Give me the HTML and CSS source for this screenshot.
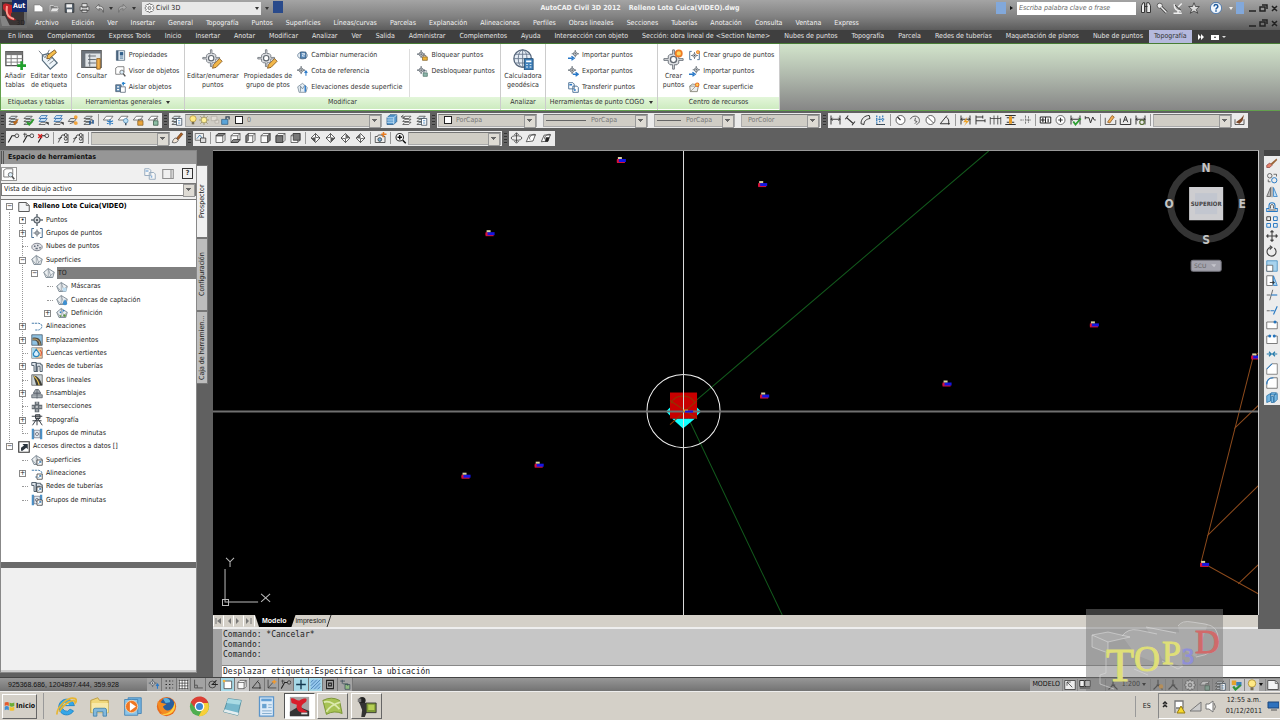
FILE: index.html
```html
<!DOCTYPE html>
<html lang="es">
<head>
<meta charset="utf-8">
<title>AutoCAD Civil 3D 2012 - Relleno Lote Cuica(VIDEO).dwg</title>
<link rel="stylesheet" href="styles.css">
</head>
<body>
<svg class="sprite" aria-hidden="true">
<defs>
<symbol id="layers" viewBox="0 0 16 16"><path d="M5 3h8l-3 3H2zM5 7h8l-3 3H2zM5 11h8l-3 3H2z" fill="#dce7ee" stroke="#444"/></symbol>
<symbol id="layer-brush" viewBox="0 0 16 16"><use href="#layers"/><path d="M7 11l4-2 4-3-2 5-3 4z" fill="#b96b21"/></symbol>
<symbol id="layer-check" viewBox="0 0 16 16"><use href="#layers"/><path d="M6 11l3 3 6-7" fill="none" stroke="#2a9d2c" stroke-width="2.5"/></symbol>
<symbol id="layer-blue" viewBox="0 0 16 16"><path d="M5 2h8l-3 4H2zM5 6h8l-3 4H2z" fill="#c9def2" stroke="#2d6eae"/><path d="M5 11h8l-3 3H2z" fill="#eee" stroke="#444"/><path d="M11 11h4v4z" fill="#333"/></symbol>
<symbol id="layer-star" viewBox="0 0 16 16"><path d="M4 6h8l-3 4H1zM3 13l5-2 5 2" fill="#ddd" stroke="#444"/><circle cx="11" cy="4" r="2.5" fill="#f2a43c"/><circle cx="11" cy="12" r="2.5" fill="#f2a43c"/></symbol>
<symbol id="layer-step" viewBox="0 0 16 16"><use href="#layers"/><path d="M9 9h2v5H9zM13 8h2v5h-2z" fill="#174e8c"/></symbol>
<symbol id="layer-freeze" viewBox="0 0 16 16"><path d="M5 3h9l-4 5H1z" fill="#fff" stroke="#555"/><path d="M10 7v8M6 9l8 4M14 9l-8 4" stroke="#2c7ac2" stroke-width="1.6"/></symbol>
<symbol id="layer-bulb" viewBox="0 0 16 16"><path d="M5 3h9l-4 5H1z" fill="#fff" stroke="#555"/><circle cx="11" cy="9" r="3" fill="#bce0f5" stroke="#4d88b1"/><path d="M11 12v3" stroke="#456" stroke-width="2"/></symbol>
<symbol id="layer-lock" viewBox="0 0 16 16"><path d="M5 3h9l-4 5H1z" fill="#fff" stroke="#555"/><path d="M8 9V7h5v3" fill="none" stroke="#555"/><path d="M7 9h7v6H7z" fill="#eaa43a" stroke="#85622a"/></symbol>
<symbol id="layer-unlock" viewBox="0 0 16 16"><path d="M5 3h9l-4 5H1z" fill="#fff" stroke="#555"/><path d="M9 9V6h4v2" fill="none" stroke="#555"/><path d="M8 9h6v6H8z" fill="#8cbda4" stroke="#355a46"/></symbol>
<symbol id="layer-prop" viewBox="0 0 16 16"><use href="#layers"/><path d="M8 6h7v9H8z" fill="#fff" stroke="#345"/><path d="M10 9h3M10 12h3" stroke="#2670b5"/></symbol>
<symbol id="layer-iso" viewBox="0 0 16 16"><path d="M6 1h9v9l-4 4H2V5z" fill="#5698cf" stroke="#285985"/><path d="M2 5h9v9M11 5l4-4M2 8h9M2 11h9" fill="none" stroke="#dceefa"/></symbol>
<symbol id="layer-prev" viewBox="0 0 16 16"><path d="M6 3h8l-3 3H3zM6 7h8l-3 3H3zM6 11h8l-3 3H3z" fill="#f4f4f4" stroke="#444"/><path d="M1 4h5M1 4l3-3" stroke="#222" fill="none"/></symbol>
<symbol id="bulb" viewBox="0 0 16 16"><circle cx="8" cy="6" r="5" fill="#ffe985" stroke="#a98724"/><path d="M6 11h4v4H6z" fill="#776d52"/></symbol>
<symbol id="sun" viewBox="0 0 16 16"><path d="M8 0v16M0 8h16M2 2l12 12M14 2L2 14" stroke="#8c8246"/><circle cx="8" cy="8" r="4.500" fill="#fff09a" stroke="#8c8246"/></symbol>
<symbol id="ghost" viewBox="0 0 16 16"><path d="M2 2h9v7H2zM8 8h6v5H8z" fill="#e0dcd4" stroke="#aba79f"/></symbol>
<symbol id="lock" viewBox="0 0 16 16"><path d="M8 7V3h5v4" fill="none" stroke="#345" stroke-width="2"/><path d="M1 7h10v8H1z" fill="#5ba4d8" stroke="#234e70"/></symbol>
<symbol id="lead" viewBox="0 0 16 16"><path d="M1 14L6 5h4" fill="none" stroke="#222" stroke-width="1.500"/><circle cx="12.500" cy="5" r="2.500" fill="none" stroke="#222"/></symbol>
<symbol id="lead-add" viewBox="0 0 16 16"><use href="#lead"/><path d="M1 3h5M3 1v6" stroke="#333"/></symbol>
<symbol id="lead-del" viewBox="0 0 16 16"><use href="#lead"/><path d="M1 3l5 5M6 3L1 8" stroke="#d22" stroke-width="2"/></symbol>
<symbol id="lead-al" viewBox="0 0 16 16"><path d="M1 14L6 4h4M1 9l5-2" fill="none" stroke="#222"/><circle cx="11" cy="4" r="2" fill="none" stroke="#222"/><circle cx="11" cy="9" r="2" fill="none" stroke="#222"/><path d="M9 14h5V3" fill="none" stroke="#222"/></symbol>
<symbol id="brush" viewBox="0 0 16 16"><path d="M1 14c1-4 3-6 5-6l3 3c-1 3-4 4-8 3z" fill="#f5e7d8" stroke="#444"/><path d="M7 8l6-7 2 2-6 7z" fill="#ad6122" stroke="#653715"/></symbol>
<symbol id="cube" viewBox="0 0 16 16"><path d="M2 5h9v9H2zM2 5l3-3h9l-3 3M14 2v9l-3 3" fill="#fafafa" stroke="#444" stroke-linejoin="round"/></symbol>
<symbol id="cube-t" viewBox="0 0 16 16"><use href="#cube"/><path d="M2 5l3-3h9l-3 3z" fill="#888" stroke="#333"/></symbol>
<symbol id="cube-b" viewBox="0 0 16 16"><use href="#cube"/><path d="M2 14l3-4h9l-3 4z" fill="#888" stroke="#333"/></symbol>
<symbol id="cube-l" viewBox="0 0 16 16"><use href="#cube"/><path d="M2 5l3-3v9l-3 3z" fill="#888" stroke="#333"/></symbol>
<symbol id="cube-r" viewBox="0 0 16 16"><use href="#cube"/><path d="M11 5l3-3v9l-3 3z" fill="#888" stroke="#333"/></symbol>
<symbol id="cube-f" viewBox="0 0 16 16"><use href="#cube"/><path d="M2 5h9v9H2z" fill="#777" stroke="#333"/></symbol>
<symbol id="cube-k" viewBox="0 0 16 16"><use href="#cube"/><path d="M5 2h9v9H5z" fill="#777" stroke="#333"/></symbol>
<symbol id="iso" viewBox="0 0 16 16"><path d="M8 2l6 6-6 6-6-6z" fill="#fff" stroke="#333"/><path d="M2 8l6-1v7z" fill="#555"/><path d="M8 2v5l6 1" fill="none" stroke="#333"/></symbol>
<symbol id="iso2" viewBox="0 0 16 16"><path d="M8 2l6 6-6 6-6-6z" fill="#fff" stroke="#333"/><path d="M14 8l-6-1v7z" fill="#555"/><path d="M8 2v5L2 8" fill="none" stroke="#333"/></symbol>
<symbol id="iso3" viewBox="0 0 16 16"><path d="M8 2l6 6-6 6-6-6z" fill="#fff" stroke="#333"/><path d="M8 2l6 6-6 1z" fill="#666"/><path d="M8 14V9L2 8" fill="none" stroke="#333"/></symbol>
<symbol id="iso4" viewBox="0 0 16 16"><path d="M8 2l6 6-6 6-6-6z" fill="#fff" stroke="#333"/><path d="M8 2L2 8l6 1z" fill="#666"/><path d="M8 14V9l6-1" fill="none" stroke="#333"/></symbol>
<symbol id="camera" viewBox="0 0 16 16"><path d="M1 6h3l1-2h5l1 2h3v8H1z" fill="#eee" stroke="#333"/><circle cx="7" cy="10" r="2.500" fill="#79aed5" stroke="#333"/><path d="M12 0v7M9 3h7" stroke="#e87b20" stroke-width="2"/></symbol>
<symbol id="views" viewBox="0 0 16 16"><path d="M1 2h11v9H1z" fill="#eee" stroke="#555"/><path d="M3 9l4-5 4 5" fill="none" stroke="#2870aa"/><path d="M8 8h7v6H8z" fill="#ddd" stroke="#333"/></symbol>
<symbol id="magnify" viewBox="0 0 16 16"><circle cx="7" cy="7" r="5" fill="#fff" stroke="#333" stroke-width="1.500"/><path d="M4 7h6M7 4v6M11 11l4 4" stroke="#111" stroke-width="2"/></symbol>
<symbol id="pan3" viewBox="0 0 16 16"><path d="M8 1v13M5 4l3-3 3 3M5 12l3 3 3-3" fill="none" stroke="#333"/><ellipse cx="8" cy="8" rx="7" ry="3" fill="none" stroke="#333"/></symbol>
<symbol id="orbit" viewBox="0 0 16 16"><path d="M1 13L5 4h8l-3 8z" fill="#fff" stroke="#333"/><path d="M6 10c-3-4 5-9 8-6" fill="none" stroke="#333"/></symbol>
<symbol id="orbit2" viewBox="0 0 16 16"><use href="#orbit"/><path d="M7 7h5l-2 6H6z" fill="#222"/></symbol>
<symbol id="dim" viewBox="0 0 16 16"><path d="M2 2v12M14 2v12M2 7h12M4 5L2 7l2 2M12 5l2 2-2 2" fill="none" stroke="#333" stroke-width="1.300"/></symbol>
<symbol id="dim-al" viewBox="0 0 16 16"><path d="M3 5l9 8M1 7l4-5M10 15l4-5" fill="none" stroke="#333" stroke-width="1.400"/></symbol>
<symbol id="arc" viewBox="0 0 16 16"><path d="M2 13C2 6 7 2 13 2M6 14c0-5 3-7 8-8M2 13l4 1M13 2l1 4" fill="none" stroke="#333" stroke-width="1.300"/></symbol>
<symbol id="ordin" viewBox="0 0 16 16"><path d="M3 2v12h11M7 3v8M11 2v8M2 7h12" fill="none" stroke="#2673b6" stroke-dasharray="2 1" stroke-width="1.600"/><path d="M2 14h12" stroke="#333"/></symbol>
<symbol id="radius" viewBox="0 0 16 16"><circle cx="8" cy="8" r="6" fill="#fff" stroke="#333"/><path d="M8 8L4 4" stroke="#222" stroke-width="1.500"/></symbol>
<symbol id="jog" viewBox="0 0 16 16"><path d="M1 7c3-6 11-5 12 0s-2 6-4 7M8 5l-1 4 3 1-3 3" fill="none" stroke="#333"/></symbol>
<symbol id="diam" viewBox="0 0 16 16"><circle cx="8" cy="8" r="6" fill="#fff" stroke="#333"/><path d="M4 4l8 8" stroke="#222"/></symbol>
<symbol id="angle" viewBox="0 0 16 16"><path d="M14 13H1l9-11M9 4c3 2 4 5 3 10" fill="none" stroke="#333" stroke-width="1.300"/></symbol>
<symbol id="dim-q" viewBox="0 0 16 16"><use href="#dim"/><path d="M10 4L5 11h4l-3 5 7-7H9z" fill="#f0a52a"/></symbol>
<symbol id="dim-base" viewBox="0 0 16 16"><path d="M2 2v12M2 4h9M2 9h12M11 2v4M14 7v4" fill="none" stroke="#333" stroke-width="1.300"/></symbol>
<symbol id="dim-cont" viewBox="0 0 16 16"><path d="M1 14V4M6 14V2M11 14V2M15 14V4M1 6h14" fill="none" stroke="#333"/></symbol>
<symbol id="dim-space" viewBox="0 0 16 16"><path d="M1 2h14M1 14h14M3 5h10M3 11h10" stroke="#333" stroke-width="1.600"/><path d="M6 3h4v10H6z" fill="#e79b25"/></symbol>
<symbol id="dim-break" viewBox="0 0 16 16"><path d="M1 8h5M9 8h6M8 2v12M12 3v9" stroke="#555" stroke-dasharray="3 1"/></symbol>
<symbol id="tol" viewBox="0 0 16 16"><path d="M1 4h14v8H1zM8 4v8" fill="#fff" stroke="#222" stroke-width="1.300"/><path d="M2 8h5M4.500 5v6M11.500 6v5" stroke="#222" stroke-width="1.500"/></symbol>
<symbol id="center" viewBox="0 0 16 16"><circle cx="8" cy="8" r="6" fill="#fff" stroke="#444"/><path d="M8 5v6M5 8h6" stroke="#333" stroke-width="1.500"/></symbol>
<symbol id="dim-check" viewBox="0 0 16 16"><use href="#dim"/><path d="M5 10l3 4 7-8" fill="none" stroke="#2d9f32" stroke-width="2.500"/></symbol>
<symbol id="zig" viewBox="0 0 16 16"><path d="M1 5h5l2 7 3-8 2 4h2M1 3v4" fill="none" stroke="#333" stroke-width="1.300"/></symbol>
<symbol id="dim-pen" viewBox="0 0 16 16"><path d="M1 5v9h14V8" fill="none" stroke="#333"/><path d="M4 11L10 2l3 2-6 8z" fill="#f2af54" stroke="#8a5620"/></symbol>
<symbol id="dim-a" viewBox="0 0 16 16"><path d="M1 6v8h14V6M5 11L8 3l3 8M6 8h4" fill="none" stroke="#333" stroke-width="1.300"/></symbol>
<symbol id="dim-upd" viewBox="0 0 16 16"><use href="#dim"/><circle cx="10" cy="11" r="3" fill="none" stroke="#566d34" stroke-width="1.500"/></symbol>
<symbol id="dim-brush" viewBox="0 0 16 16"><path d="M2 7v7h12V7" fill="none" stroke="#333"/><path d="M3 11l7-5 4-5-2 8-4 4z" fill="#7c4728"/></symbol>

<symbol id="pt" viewBox="0 0 16 16"><path d="M8 0v16M0 8h16" stroke="#667078" stroke-width="2"/><circle cx="8" cy="8" r="4" fill="#d7dadd" stroke="#5b636b" stroke-width="1.500"/><circle cx="8" cy="8" r="1.500" fill="#4a5056"/></symbol>
<symbol id="pt-big" viewBox="0 0 24 24"><path d="M11 1h2v5h3l2 2v3h5v2h-5v3l-2 2h-3v5h-2v-5H8l-2-2v-3H1v-2h5V8l2-2h3z" fill="#dfe1e4" stroke="#626971"/><circle cx="12" cy="12" r="3.500" fill="#fff" stroke="#626971" stroke-width="1.500"/></symbol>
<symbol id="pt-edit" viewBox="0 0 24 24"><use href="#pt-big" width="21" height="21"/><path d="M12 22l1-4 7-7 3 3-7 7z" fill="#f2b749" stroke="#885c22"/></symbol>
<symbol id="pt-new" viewBox="0 0 24 24"><use href="#pt-big"/><circle cx="18" cy="5" r="3.500" fill="#ffd45b" stroke="#ed7b26" stroke-width="2"/></symbol>
<symbol id="table" viewBox="0 0 24 24"><path d="M1 3h19v16H1z" fill="#fff" stroke="#555" stroke-width="1.500"/><path d="M1 3h19v4H1z" fill="#777"/><path d="M1 11h19M1 15h19M7 7v12M14 7v12" stroke="#777"/><path d="M19 14v10M14 19h10" stroke="#21a12d" stroke-width="3"/></symbol>
<symbol id="tag" viewBox="0 0 24 24"><path d="M5 7l7-2 10 11-8 7L5 13z" fill="#eef5fa" stroke="#566b7b" stroke-width="1.300"/><path d="M1 2l7 8 5-9M11 14l5-4M13 17l5-4" fill="none" stroke="#68717a"/><path d="M10 11l1-4 8-6 2 3-8 7z" fill="#f6be4c" stroke="#76501a"/></symbol>
<symbol id="inquiry" viewBox="0 0 24 24"><path d="M1 2h22v19H1z" fill="#dfe3e6" stroke="#555" stroke-width="1.500"/><path d="M1 2h4v19H1zM1 2h22v3H1z" fill="#6c737b"/><path d="M8 8h9M8 12h9M8 16h9M10 6v14" stroke="#59616a"/><path d="M18 11h4v12h-4z" fill="#f2b14a" stroke="#8b5d20"/></symbol>
<symbol id="globe" viewBox="0 0 24 24"><circle cx="11" cy="11" r="10" fill="#e6edf5" stroke="#55657a" stroke-width="1.500"/><ellipse cx="11" cy="11" rx="5" ry="10" fill="none" stroke="#65758a"/><path d="M1 11h20M3 6h16M3 16h16M11 1v20" stroke="#65758a"/><path d="M13 11h10v13H13z" fill="#3f80ba" stroke="#244e75"/><path d="M15 13h6v2h-6zM15 17h2v1h-2zM19 17h2v1h-2zM15 20h2v1h-2zM19 20h2v1h-2z" fill="#fff"/></symbol>
<symbol id="props" viewBox="0 0 16 16"><path d="M2 1h12v14H2z" fill="#e7f0f7" stroke="#42566b"/><path d="M2 1h3v14H2z" fill="#47627c"/><path d="M7 3h5v5H7z" fill="#315f8a"/><path d="M7 10h5M7 12h5" stroke="#315f8a"/></symbol>
<symbol id="viewer" viewBox="0 0 16 16"><path d="M1 12V3l3-2h9v8" fill="#fff" stroke="#555"/><path d="M1 12h7" stroke="#555"/><circle cx="10" cy="9" r="3" fill="#d8ebf7" stroke="#555"/><path d="M12 11l3 4" stroke="#555" stroke-width="2"/></symbol>
<symbol id="isolate" viewBox="0 0 16 16"><path d="M1 4h8v10H1z" fill="#5d87ae" stroke="#456"/><path d="M3 6h3v2H3zM3 10h3v2H3z" fill="#fff"/><path d="M8 7h7v8H8z" fill="#fff" stroke="#456"/><path d="M12 0v5M10 2h5" stroke="#2783cd" stroke-width="2"/></symbol>
<symbol id="renum" viewBox="0 0 16 16"><ellipse cx="8" cy="8" rx="7" ry="5" fill="#eef5fb" stroke="#4a6682"/><path d="M5 3h8v9H5z" fill="#5b8dbe" stroke="#294c70"/><path d="M7 5h4v2H8v2h3" fill="none" stroke="#fff"/></symbol>
<symbol id="datum" viewBox="0 0 16 16"><use href="#pt" width="12" height="12"/><path d="M13 7v7M11 10l2-3 2 3" fill="none" stroke="#2878c8" stroke-width="1.500"/></symbol>
<symbol id="elev" viewBox="0 0 16 16"><path d="M1 7l7-5 7 6-2 7H3z" fill="#e5eef5" stroke="#657888"/><path d="M5 14V6l3 4 3-5" fill="none" stroke="#657888"/><path d="M12 5v9" stroke="#2878c8" stroke-width="2"/></symbol>
<symbol id="pt-lock" viewBox="0 0 16 16"><use href="#pt" width="12" height="12"/><path d="M9 10V8h4v2" fill="none" stroke="#654"/><path d="M8 10h7v5H8z" fill="#eeb336" stroke="#775b25"/></symbol>
<symbol id="pt-unlock" viewBox="0 0 16 16"><use href="#pt" width="12" height="12"/><path d="M10 10V7h4v1" fill="none" stroke="#345"/><path d="M9 10h6v5H9z" fill="#8eb6ac" stroke="#456d62"/></symbol>
<symbol id="import" viewBox="0 0 16 16"><use href="#pt" x="5" width="11" height="11"/><path d="M0 12h7M5 9l4 3-4 3" fill="none" stroke="#2878c8" stroke-width="2"/></symbol>
<symbol id="export" viewBox="0 0 16 16"><use href="#pt" width="12" height="12"/><path d="M7 12h7M11 9l4 3-4 3" fill="none" stroke="#2878c8" stroke-width="2"/></symbol>
<symbol id="transfer" viewBox="0 0 16 16"><path d="M1 1h6l2 2v7H1zM7 6h6l2 2v7H7z" fill="#fff" stroke="#456b90" stroke-width="1.300"/><path d="M2 4h4M10 10v3" stroke="#2878c8" stroke-width="2"/></symbol>
<symbol id="ptgroup" viewBox="0 0 16 16"><path d="M4 2H1v12h3M12 2h3v12h-3" fill="none" stroke="#456b90" stroke-width="1.300"/><use href="#pt" x="3" y="3" width="10" height="10"/></symbol>
<symbol id="ptgroup-new" viewBox="0 0 16 16"><use href="#ptgroup"/><circle cx="13" cy="3" r="2" fill="#ffe46a" stroke="#ee7925" stroke-width="1.500"/></symbol>
<symbol id="surf" viewBox="0 0 16 16"><path d="M1 7l6-5 8 5-2 7H4z" fill="#edf0f2" stroke="#778590" stroke-width="1.200"/><path d="M7 2v12M1 7l6 7 8-7M7 2l4 12" fill="none" stroke="#8b969f"/></symbol>
<symbol id="surf-new" viewBox="0 0 16 16"><path d="M1 6l4-3 9 1-2 10H2z" fill="#eee" stroke="#665"/><path d="M1 6h9l3-2M10 6l-8 8" fill="none" stroke="#887"/><circle cx="12" cy="4" r="2.500" fill="#ffda55" stroke="#ed6b22" stroke-width="1.500"/></symbol>
<symbol id="surf-mask" viewBox="0 0 16 16"><use href="#surf"/><path d="M9 9h5v5H9z" fill="#bcdcf0"/></symbol>
<symbol id="surf-drop" viewBox="0 0 16 16"><use href="#surf"/><path d="M12 7l3 5c0 4-6 4-6 0z" fill="#3f91d2"/></symbol>
<symbol id="surf-def" viewBox="0 0 16 16"><use href="#surf"/><path d="M5 6h2v2H5zM9 4h2v2H9z" fill="#2c80c9"/><path d="M10 10h3v3h-3zM5 11h2v2H5z" fill="#58963c"/></symbol>
<symbol id="cloud" viewBox="0 0 16 16"><ellipse cx="8" cy="8" rx="7" ry="5" fill="#e2e2e6" stroke="#666b77"/><path d="M4 6h2v2H4zM8 5h2v2H8zM11 8h2v2h-2zM6 9h3v2H6z" fill="#616d7b"/></symbol>
<symbol id="align" viewBox="0 0 16 16"><path d="M1 3h9c7 1 5 8 0 9H5" fill="none" stroke="#477cab" stroke-width="1.300" stroke-dasharray="3 1"/></symbol>
<symbol id="site" viewBox="0 0 16 16"><path d="M1 1h14v14H1z" fill="#8fc2e2" stroke="#456"/><path d="M2 5c8-2 12 3 12 10H9C9 10 7 8 2 9z" fill="#565044"/><path d="M2 7c6-1 10 2 10 8" fill="none" stroke="#eec37a"/></symbol>
<symbol id="basin" viewBox="0 0 16 16"><path d="M1 1h14v14H1z" fill="#f3cf9d" stroke="#766"/><path d="M1 1h5v14H1z" fill="#add8e9"/><path d="M7 3l4 6c0 5-8 5-8 0z" fill="#d9f0fd" stroke="#2684bd" stroke-width="1.500"/><path d="M12 4l2 3-1 5" fill="none" stroke="#df5537" stroke-width="1.500"/></symbol>
<symbol id="pipe" viewBox="0 0 16 16"><path d="M1 2h6v12H4V6H1zM7 3h6v2h2v9h-3V7H9v7H7z" fill="#dce3e9" stroke="#465562" stroke-width="1.200"/></symbol>
<symbol id="road" viewBox="0 0 16 16"><path d="M1 1h14v14H1z" fill="#cbd4d8" stroke="#555"/><path d="M3 2l4 13h8C13 8 9 2 3 2z" fill="#3e3e37"/><path d="M4 3c5 4 6 8 7 12" stroke="#eac04d" fill="none" stroke-width="1.500"/></symbol>
<symbol id="assembly" viewBox="0 0 16 16"><path d="M3 7l3-5h4l3 5zM1 9h14v4H1z" fill="#a9b0b6" stroke="#505a64"/><path d="M8 2v12M3 7h10" stroke="#505a64"/></symbol>
<symbol id="inter" viewBox="0 0 16 16"><path d="M5 1h6v4h4v6h-4v4H5v-4H1V5h4z" fill="#656d74"/><path d="M8 1v14M1 8h14" stroke="#fff" stroke-dasharray="3 2"/></symbol>
<symbol id="survey" viewBox="0 0 16 16"><path d="M1 3h14M6 1h6v5H6zM8 6L2 15M8 6v9M9 6l6 9M2 9h12" fill="#aaa" stroke="#363d44" stroke-width="1.300"/></symbol>
<symbol id="minutes" viewBox="0 0 16 16"><path d="M1 1h3v14H1zM12 1h3v14h-3z" fill="#4991c8"/><path d="M4 3h8v10H4z" fill="#dfebf3" stroke="#778"/><circle cx="8" cy="8" r="2" fill="#fff" stroke="#556"/></symbol>
<symbol id="link" viewBox="0 0 16 16"><path d="M1 1h14v14H1z" fill="#fff" stroke="#333" stroke-width="1.500"/><path d="M4 13V9l4-3-2-2h7v7l-2-2-5 4z" fill="#29333c"/></symbol>
<symbol id="file" viewBox="0 0 16 16"><path d="M1 2h10l4 4v8H1z" fill="#f4f5f6" stroke="#555" stroke-width="1.300"/><path d="M11 2v4h4" fill="none" stroke="#555"/></symbol>
<symbol id="badge" viewBox="0 0 16 16"><path d="M8 8h7v7H8z" fill="#fff" stroke="#333"/><path d="M10 13l3-3M11 10h2v2" fill="none" stroke="#226caa"/></symbol>

<symbol id="new" viewBox="0 0 16 16"><path d="M1 3h9l5 4v7H1z" fill="#fff" stroke="#777"/></symbol>
<symbol id="open" viewBox="0 0 16 16"><path d="M1 4h5l2 2h5v8H1z" fill="#777" stroke="#eee"/><path d="M4 8h12l-4 6H1z" fill="#e5e5e5" stroke="#777"/></symbol>
<symbol id="save" viewBox="0 0 16 16"><path d="M1 1h14v14H1z" fill="#56626e" stroke="#222"/><path d="M3 2h9v5H3zM4 10h8v5H4z" fill="#f3f3f3"/></symbol>
<symbol id="print" viewBox="0 0 16 16"><path d="M4 1h8v6H4zM1 6h14v6H1zM4 10h8v5H4z" fill="#e2e2e2" stroke="#333"/></symbol>
<symbol id="undo" viewBox="0 0 16 16"><path d="M2 7l5-5v3c7 0 8 4 7 10-1-5-3-6-7-6v3z" fill="#ddd" stroke="#444"/></symbol>
<symbol id="redo" viewBox="0 0 16 16"><path d="M14 7L9 2v3C2 5 1 9 2 15c1-5 3-6 7-6v3z" fill="#aaa" stroke="#666"/></symbol>
<symbol id="gear" viewBox="0 0 16 16"><path d="M7 1h2l1 2 2-1 2 2-1 2 2 1v2l-2 1 1 2-2 2-2-1-1 2H7l-1-2-2 1-2-2 1-2-2-1V7l2-1-1-2 2-2 2 1z" fill="#fff" stroke="#444"/><circle cx="8" cy="8" r="2.500" fill="#ddd" stroke="#444"/></symbol>
<symbol id="bino" viewBox="0 0 16 16"><path d="M2 14V5l2-4h2v13zM9 14V1h3l2 4v9zM6 6h4" fill="#eee" stroke="#333" stroke-width="1.300"/></symbol>
<symbol id="key" viewBox="0 0 16 16"><circle cx="5" cy="5" r="3.500" fill="#eee" stroke="#444"/><path d="M7 7l7 7" stroke="#333" stroke-width="4"/><path d="M7 7l7 7" stroke="#eee" stroke-width="2"/></symbol>
<symbol id="dish" viewBox="0 0 16 16"><path d="M3 3c0 6 3 9 9 9M8 7l5-5M2 15h11M8 11v4" fill="none" stroke="#eee" stroke-width="2"/><path d="M4 4l8 7" stroke="#222"/></symbol>
<symbol id="star" viewBox="0 0 16 16"><path d="M8 1l2 5h5l-4 4 2 5-5-3-5 3 2-5-4-4h5z" fill="#ddd" stroke="#333"/></symbol>
<symbol id="help" viewBox="0 0 16 16"><circle cx="8" cy="8" r="7.500" fill="#f0f5fb" stroke="#3167a5"/><path d="M5.500 6c0-4 5-3 5 0 0 2-2.500 1.500-2.500 4M8 11v2" fill="none" stroke="#1e5b9f" stroke-width="2"/></symbol>

<symbol id="erase" viewBox="0 0 16 16"><path d="M1 11l4-3 3 3-3 3H1z" fill="#e8836b" stroke="#844"/><path d="M6 9l8-7 1 2-7 7z" fill="#9b6539"/></symbol>
<symbol id="copy" viewBox="0 0 16 16"><circle cx="5" cy="5" r="3" fill="none" stroke="#444"/><circle cx="11" cy="11" r="3.500" fill="none" stroke="#287ac4" stroke-width="1.300"/><path d="M10 3h4v3M3 10v3h3" fill="none" stroke="#444"/></symbol>
<symbol id="mirror" viewBox="0 0 16 16"><path d="M6 2v12H1z" fill="#bbb" stroke="#555"/><path d="M10 2v12h5z" fill="#bfdef4" stroke="#287ac4"/><path d="M8 1v14" stroke="#555"/></symbol>
<symbol id="offset" viewBox="0 0 16 16"><path d="M1 14h14v-4h-3V6c0-5-8-5-8 0v4H1z" fill="none" stroke="#287ac4" stroke-width="1.400"/><path d="M3 12h10M6 10V7c0-3 4-3 4 0v3" fill="none" stroke="#333"/></symbol>
<symbol id="array" viewBox="0 0 16 16"><path d="M1 1h5v5H1z" fill="none" stroke="#444" stroke-width="1.300"/><path d="M10 1h5v5h-5zM1 10h5v5H1zM10 10h5v5h-5z" fill="none" stroke="#287ac4" stroke-width="1.300"/></symbol>
<symbol id="move" viewBox="0 0 16 16"><path d="M8 1v14M1 8h14M6 3l2-2 2 2M6 13l2 2 2-2M3 6L1 8l2 2M13 6l2 2-2 2" fill="none" stroke="#444" stroke-width="1.500"/></symbol>
<symbol id="rotate" viewBox="0 0 16 16"><path d="M6 3a6 6 0 1 0 5 1M5 1l3 2-3 3" fill="none" stroke="#444" stroke-width="1.500"/></symbol>
<symbol id="scale" viewBox="0 0 16 16"><path d="M1 1h14v14H1z" fill="#a8d3ee" stroke="#3988bd"/><path d="M1 7h8v8H1z" fill="#fff" stroke="#555"/></symbol>
<symbol id="stretch" viewBox="0 0 16 16"><path d="M1 1h8v13H1z" fill="#fff" stroke="#555"/><path d="M10 1v13h5z" fill="#a8d3ee" stroke="#287ac4"/><path d="M5 10h6M9 8l2 2-2 2" stroke="#222" fill="none"/></symbol>
<symbol id="trim" viewBox="0 0 16 16"><path d="M1 8h5M9 1L5 15" stroke="#444"/><path d="M7 8h8" stroke="#287ac4" stroke-width="1.500"/></symbol>
<symbol id="extend" viewBox="0 0 16 16"><path d="M1 9h4" stroke="#444"/><path d="M6 9h5M15 3l-5 11" stroke="#287ac4" stroke-width="1.500"/></symbol>
<symbol id="breakp" viewBox="0 0 16 16"><path d="M1 13V4h14M1 13h14V4" fill="#fff" stroke="#555"/><circle cx="12" cy="4" r="2" fill="#2474bd"/></symbol>
<symbol id="break" viewBox="0 0 16 16"><path d="M4 4H1v10h14V4h-3" fill="#fff" stroke="#555"/><circle cx="5" cy="4" r="2" fill="#2474bd"/><circle cx="11" cy="4" r="2" fill="#2474bd"/></symbol>
<symbol id="join" viewBox="0 0 16 16"><path d="M1 8h14M4 5l3 3-3 3M12 5L9 8l3 3" fill="none" stroke="#257bab" stroke-width="1.500"/></symbol>
<symbol id="chamfer" viewBox="0 0 16 16"><path d="M1 15V8l7-7h7v14z" fill="#fff" stroke="#666"/><path d="M1 8l7-7" stroke="#287ac4" stroke-width="1.400"/></symbol>
<symbol id="fillet" viewBox="0 0 16 16"><path d="M1 15V10q0-9 9-9h5v14z" fill="#fff" stroke="#555"/><path d="M1 10q0-9 9-9" fill="none" stroke="#287ac4" stroke-width="1.400"/></symbol>
<symbol id="explode" viewBox="0 0 16 16"><path d="M1 5l5-3v10l-5 2zM7 6h3v8H7zM11 4l4-2v8l-4 4zM7 1h7l-3 3H6z" fill="#75b7e3" stroke="#20699f"/></symbol>

<symbol id="snap" viewBox="0 0 16 16"><path d="M3 3h2M8 3h2M13 3h1M3 8h2M8 8h2M13 8h1M3 13h2M8 13h2M13 13h1" stroke="#222" stroke-width="1.500"/></symbol>
<symbol id="grid" viewBox="0 0 16 16"><path d="M1 1h14v14H1z" fill="#fff"/><path d="M1 2h14M1 6h14M1 10h14M1 14h14M2 1v14M6 1v14M10 1v14M14 1v14" stroke="#333"/></symbol>
<symbol id="ortho" viewBox="0 0 16 16"><path d="M3 1v12h12M3 9h4v4" fill="none" stroke="#555" stroke-width="1.400"/></symbol>
<symbol id="polar" viewBox="0 0 16 16"><circle cx="7" cy="8" r="5" fill="none" stroke="#222"/><path d="M15 8H7l6-6" fill="none" stroke="#222" stroke-width="1.500"/></symbol>
<symbol id="osnap" viewBox="0 0 16 16"><path d="M3 3h11v11H3z" fill="#fff" stroke="#333"/><circle cx="3" cy="3" r="2" fill="#f2b43c"/></symbol>
<symbol id="dyn" viewBox="0 0 16 16"><path d="M8 1v14M1 8h14" stroke="#14384e" stroke-width="2"/></symbol>
<symbol id="ducs" viewBox="0 0 16 16"><path d="M3 1v12h12M3 13l8-9" fill="none" stroke="#333"/><path d="M12 1v6M9 4h6" stroke="#f29a2e" stroke-width="2"/></symbol>
<symbol id="hatch" viewBox="0 0 16 16"><path d="M1 1h14v14H1z" fill="#93c5ec"/><path d="M1 5l4-4M1 10l9-9M1 15L15 1M6 15l9-9M11 15l4-4" stroke="#3973a5"/></symbol>
<symbol id="qp" viewBox="0 0 16 16"><path d="M3 2h10v12H3zM6 6h4v4H6z" fill="none" stroke="#222" stroke-width="1.500"/></symbol>
<symbol id="cycle" viewBox="0 0 16 16"><path d="M1 3h7M4 1v6M5 7h7v3M8 8h7v7H8z" fill="#8fba80" stroke="#345"/></symbol>
<symbol id="screen" viewBox="0 0 16 16"><path d="M1 2h14v12H1z" fill="#eee" stroke="#333"/><path d="M4 4l7 7M4 4v5M4 4h5" stroke="#333"/></symbol>
<symbol id="panes" viewBox="0 0 16 16"><path d="M1 2h6v8H1zM8 2h7v8H8zM1 12h14" fill="#eee" stroke="#333" stroke-width="1.300"/></symbol>
<symbol id="man" viewBox="0 0 16 16"><path d="M8 1v7l-6 6M8 8l6 6M6 8h5" stroke="#333" stroke-width="1.500" fill="none"/></symbol>
<symbol id="man-sun" viewBox="0 0 16 16"><use href="#man"/><circle cx="12" cy="10" r="3" fill="#f2a53c"/></symbol>
<symbol id="shield" viewBox="0 0 16 16"><path d="M1 2h6v6H1z" fill="#e3a32c"/><path d="M7 4h7v5H7z" fill="#367fba"/><path d="M3 10l3 4 7-6" fill="none" stroke="#2b923b" stroke-width="3"/></symbol>
</defs>
</svg>

<header class="top">
  <button class="app" aria-label="Menú de la aplicación"><svg viewBox="0 0 27 28"><path d="M0 0h27v28H0z" fill="#6b6b6b"/><path d="M2 2h22v23H2z" fill="#3b3535"/><path d="M3 5c3-4 7 1 11 0 4-2 6 1 2 5-3 3-5 1-5 5 0 3 4 3 5 5-6 1-10-2-9-7L3 9z" fill="#c3242a"/><path d="M7 6c-1 7 0 11 7 13" fill="none" stroke="#ff9b90" stroke-width="2"/><path d="M0 16h5l5 10H2z" fill="#858585"/></svg><span>3D</span></button>
  <b class="drag">Aut</b>
  <div class="title">
    <div class="quick">
      <button aria-label="Nuevo"><svg><use href="#new"/></svg></button><button aria-label="Abrir"><svg><use href="#open"/></svg></button><button aria-label="Guardar"><svg><use href="#save"/></svg></button><button aria-label="Imprimir"><svg><use href="#print"/></svg></button><button aria-label="Deshacer"><svg><use href="#undo"/></svg></button><i class="tri"></i><button aria-label="Rehacer"><svg><use href="#redo"/></svg></button><i class="tri"></i>
      <label class="space"><svg><use href="#gear"/></svg><select aria-label="Espacio de trabajo"><option>Civil 3D</option></select><i class="tri"></i></label>
      <i class="tri"></i><span class="blue"></span>
    </div>
    <h1><span>AutoCAD Civil 3D 2012</span><span>Relleno Lote Cuica(VIDEO).dwg</span></h1>
    <div class="info"><span class="blue pale"></span><i class="tri side"></i><input type="text" aria-label="Buscar" placeholder="Escriba palabra clave o frase">
      <button aria-label="Buscar"><svg><use href="#bino"/></svg></button><button aria-label="Suscripción"><svg><use href="#key"/></svg></button><button aria-label="Comunicación"><svg><use href="#dish"/></svg></button><button aria-label="Favoritos"><svg><use href="#star"/></svg></button><button class="q" aria-label="Ayuda"><svg><use href="#help"/></svg></button><i class="tri"></i><span class="blue pale small"></span>
      <svg class="win" viewBox="0 0 30 10"><path d="M1 8h7M12 4h5v4h-5zM14 2h5v4M24 3l5 5M29 3l-5 5" fill="none" stroke="#222" stroke-width="1.500"/></svg>
    </div>
  </div>
  <nav class="menus"><a href="#">Archivo</a><a href="#">Edición</a><a href="#">Ver</a><a href="#">Insertar</a><a href="#">General</a><a href="#">Topografía</a><a href="#">Puntos</a><a href="#">Superficies</a><a href="#">Líneas/curvas</a><a href="#">Parcelas</a><a href="#">Explanación</a><a href="#">Alineaciones</a><a href="#">Perfiles</a><a href="#">Obras lineales</a><a href="#">Secciones</a><a href="#">Tuberías</a><a href="#">Anotación</a><a href="#">Consulta</a><a href="#">Ventana</a><a href="#">Express</a><svg class="win" viewBox="0 0 30 10"><path d="M1 8h7M12 4h5v4h-5zM14 2h5v4M24 3l5 5M29 3l-5 5" fill="none" stroke="#222" stroke-width="1.500"/></svg></nav>
</header>
<nav class="tabs"><a href="#">En línea</a><a href="#">Complementos</a><a href="#">Express Tools</a><a href="#">Inicio</a><a href="#">Insertar</a><a href="#">Anotar</a><a href="#">Modificar</a><a href="#">Analizar</a><a href="#">Ver</a><a href="#">Salida</a><a href="#">Administrar</a><a href="#">Complementos</a><a href="#">Ayuda</a><a href="#">Intersección con objeto</a><a href="#">Sección: obra lineal de &lt;Section Name&gt;</a><a href="#">Nubes de puntos</a><a href="#">Topografía</a><a href="#">Parcela</a><a href="#">Redes de tuberías</a><a href="#">Maquetación de planos</a><a href="#">Nube de puntos</a><a href="#" class="on">Topografía</a><svg class="more" viewBox="0 0 30 10"><path d="M1 2l3 3-3 3zM4 2l3 3-3 3zM14 3h8v5h-8z" fill="#fff"/><path d="M17 6l1-2 1 2z" fill="#333"/><path d="M25 4h4l-2 2z" fill="#ddd"/></svg></nav>

<section class="ribbon">
  <div class="panel p1"><div class="body">
    <button class="big"><svg><use href="#table"/></svg>Añadir<br>tablas</button><button class="big"><svg><use href="#tag"/></svg>Editar texto<br>de etiqueta</button></div><h2>Etiquetas y tablas</h2></div>
  <div class="panel p2"><div class="body">
    <button class="big"><svg><use href="#inquiry"/></svg>Consultar</button>
    <div class="list"><button><svg><use href="#props"/></svg>Propiedades</button><button><svg><use href="#viewer"/></svg>Visor de objetos</button><button><svg><use href="#isolate"/></svg>Aislar objetos</button></div></div><h2>Herramientas generales <i class="tri"></i></h2></div>
  <div class="panel p3"><div class="body">
    <button class="big"><svg><use href="#pt-edit"/></svg>Editar/enumerar<br>puntos</button><button class="big"><svg><use href="#pt-edit"/></svg>Propiedades de<br>grupo de ptos</button>
    <div class="list"><button><svg><use href="#renum"/></svg>Cambiar numeración</button><button><svg><use href="#datum"/></svg>Cota de referencia</button><button><svg><use href="#elev"/></svg>Elevaciones desde superficie</button></div>
    <div class="list cut"><button><svg><use href="#pt-lock"/></svg>Bloquear puntos</button><button><svg><use href="#pt-unlock"/></svg>Desbloquear puntos</button></div></div><h2>Modificar</h2></div>
  <div class="panel p4"><div class="body"><button class="big"><svg><use href="#globe"/></svg>Calculadora<br>geodésica</button></div><h2>Analizar</h2></div>
  <div class="panel p5"><div class="body"><div class="list"><button><svg><use href="#import"/></svg>Importar puntos</button><button><svg><use href="#export"/></svg>Exportar puntos</button><button><svg><use href="#transfer"/></svg>Transferir puntos</button></div></div><h2>Herramientas de punto COGO <i class="tri"></i></h2></div>
  <div class="panel p6"><div class="body"><button class="big"><svg><use href="#pt-new"/></svg>Crear<br>puntos</button>
    <div class="list"><button><svg><use href="#ptgroup-new"/></svg>Crear grupo de puntos</button><button><svg><use href="#import"/></svg>Importar puntos</button><button><svg><use href="#surf-new"/></svg>Crear superficie</button></div></div><h2>Centro de recursos</h2></div>
</section>

<section class="bars">
  <div class="bar">
    <div class="grp"><svg><use href="#layer-brush"/></svg><svg><use href="#layer-check"/></svg><svg><use href="#layer-blue"/></svg><svg><use href="#layer-blue"/></svg><svg><use href="#layer-star"/></svg><svg><use href="#layer-step"/></svg><hr><svg><use href="#layer-freeze"/></svg><svg><use href="#layer-bulb"/></svg><svg><use href="#layer-lock"/></svg><svg><use href="#layer-unlock"/></svg></div>
    <div class="grp"><svg><use href="#layer-prop"/></svg><span class="combo layer"><svg><use href="#bulb"/></svg><svg><use href="#sun"/></svg><svg><use href="#ghost"/></svg><svg><use href="#lock"/></svg><i class="sq"></i><select aria-label="Capa"><option>0</option></select></span><svg class="gapl"><use href="#layer-iso"/></svg><svg><use href="#layer-prev"/></svg><svg><use href="#layer-prop"/></svg></div>
    <div class="grp props"><span class="combo c1"><i class="sq"></i><select aria-label="Color"><option>PorCapa</option></select></span><span class="combo c2"><i class="ln"></i><select aria-label="Tipo de línea"><option>PorCapa</option></select></span><span class="combo c3"><i class="ln"></i><select aria-label="Grosor"><option>PorCapa</option></select></span><span class="combo c4"><select aria-label="Estilo de trazado"><option>PorColor</option></select></span></div>
    <div class="grp"><svg><use href="#dim"/></svg><svg><use href="#dim-al"/></svg><svg><use href="#arc"/></svg><svg><use href="#ordin"/></svg><hr><svg><use href="#radius"/></svg><svg><use href="#jog"/></svg><svg><use href="#diam"/></svg><svg><use href="#angle"/></svg><hr><svg><use href="#dim-q"/></svg><svg><use href="#dim-base"/></svg><svg><use href="#dim-cont"/></svg><svg><use href="#dim-space"/></svg><svg><use href="#dim-break"/></svg><hr><svg><use href="#tol"/></svg><svg><use href="#center"/></svg><svg><use href="#dim-check"/></svg><svg><use href="#zig"/></svg><hr><svg><use href="#dim-pen"/></svg><svg><use href="#dim-a"/></svg><svg><use href="#dim-upd"/></svg><hr><span class="combo c5"><select aria-label="Estilo de cota"><option></option></select></span><svg><use href="#dim-brush"/></svg></div>
  </div>
  <div class="bar">
    <div class="grp"><svg><use href="#lead"/></svg><svg><use href="#lead-add"/></svg><svg><use href="#lead-del"/></svg><hr><svg><use href="#lead-al"/></svg><svg><use href="#lead-al"/></svg><hr><span class="combo c5"><select aria-label="Estilo de directriz"><option></option></select></span><svg><use href="#brush"/></svg></div>
    <div class="grp"><svg><use href="#views"/></svg><hr><svg><use href="#cube-t"/></svg><svg><use href="#cube-b"/></svg><svg><use href="#cube-l"/></svg><svg><use href="#cube-r"/></svg><svg><use href="#cube-f"/></svg><svg><use href="#cube-k"/></svg><hr><svg><use href="#iso"/></svg><svg><use href="#iso2"/></svg><svg><use href="#iso3"/></svg><svg><use href="#iso4"/></svg><hr><svg><use href="#camera"/></svg><hr><svg><use href="#magnify"/></svg><span class="combo c6"><select aria-label="Vista"><option></option></select></span></div>
    <div class="grp"><svg><use href="#pan3"/></svg><svg><use href="#orbit"/></svg><svg><use href="#orbit2"/></svg></div>
  </div>
</section>

<main>
  <aside class="palette">
    <h2>Espacio de herramientas</h2>
    <div class="tools"><button class="on" aria-label="Vista previa"><svg><use href="#viewer"/></svg></button><span></span><button class="dim" aria-label="Organizar"><svg><use href="#transfer"/></svg></button><button class="dim" aria-label="Panorama"><svg viewBox="0 0 16 16"><path d="M1 2h14v12H1zM12 2v12" fill="none" stroke="#333" stroke-width="1.500"/></svg></button><button class="hq" aria-label="Ayuda">?</button></div>
    <span class="combo view"><select aria-label="Vista"><option>Vista de dibujo activo</option></select></span>
    <ul class="tree">
      <li class="l0"><button>−</button><svg><use href="#file"/></svg><b>Relleno Lote Cuica(VIDEO)</b></li>
      <li class="l1"><button>•</button><svg><use href="#pt"/></svg>Puntos</li>
      <li class="l1"><button>+</button><svg><use href="#ptgroup"/></svg>Grupos de puntos</li>
      <li class="l1 leaf"><svg><use href="#cloud"/></svg>Nubes de puntos</li>
      <li class="l1"><button>−</button><svg><use href="#surf"/></svg>Superficies</li>
      <li class="l2"><button>−</button><svg><use href="#surf"/></svg><span class="sel">TO</span></li>
      <li class="l3 leaf"><svg><use href="#surf-mask"/></svg>Máscaras</li>
      <li class="l3 leaf"><svg><use href="#surf-drop"/></svg>Cuencas de captación</li>
      <li class="l3"><button>+</button><svg><use href="#surf-def"/></svg>Definición</li>
      <li class="l1"><button>+</button><svg><use href="#align"/></svg>Alineaciones</li>
      <li class="l1"><button>+</button><svg><use href="#site"/></svg>Emplazamientos</li>
      <li class="l1 leaf"><svg><use href="#basin"/></svg>Cuencas vertientes</li>
      <li class="l1"><button>+</button><svg><use href="#pipe"/></svg>Redes de tuberías</li>
      <li class="l1 leaf"><svg><use href="#road"/></svg>Obras lineales</li>
      <li class="l1"><button>+</button><svg><use href="#assembly"/></svg>Ensamblajes</li>
      <li class="l1 leaf"><svg><use href="#inter"/></svg>Intersecciones</li>
      <li class="l1"><button>+</button><svg><use href="#survey"/></svg>Topografía</li>
      <li class="l1 leaf"><svg><use href="#minutes"/></svg>Grupos de minutas</li>
      <li class="l0"><button>−</button><svg><use href="#link"/></svg>Accesos directos a datos []</li>
      <li class="l1 leaf"><svg><use href="#surf"/><use href="#badge"/></svg>Superficies</li>
      <li class="l1"><button>+</button><svg><use href="#align"/><use href="#badge"/></svg>Alineaciones</li>
      <li class="l1 leaf"><svg><use href="#pipe"/><use href="#badge"/></svg>Redes de tuberías</li>
      <li class="l1 leaf"><svg><use href="#minutes"/><use href="#badge"/></svg>Grupos de minutas</li>
    </ul>
    <div class="preview"></div>
  </aside>
  <div class="vtabs"><button class="on t1">Prospector</button><button class="t2">Configuración</button><button class="t3">Caja de herramien...</button></div>
  <div class="work">
    <div class="stage">
      <svg class="drawing" viewBox="213 151 1045 463" preserveAspectRatio="xMinYMin slice">
        <defs><g id="mk"><path d="M-4 0h8v3h-8z" fill="#d81038"/><path d="M-3-1h8v3h-8z" fill="#1515e0"/><path d="M-4-1h2v3h-2z" fill="#d81038"/><path d="M-3-3h4v2h-4z" fill="#d8d0a0"/></g></defs>
        <path d="M987 151L682 411M687 417l94 197" stroke="#12591c" fill="none"/>
        <path d="M1251 356l-52 205 59 33M1258 350l-7 8M1232 428l26-25M1205 535l53-52M1236 583l22-21" stroke="#8c4a1c" fill="none"/>
        <path d="M665 411l5-5v10zM700 411l-5-5v10zM671 418h23l-12 10z" fill="#1ff"/>
        <path d="M669 392h27v26h-27z" fill="#c80000"/>
        <path d="M670 403c4-10 20-10 24 0M669 400l27 18M696 400l-27 24" stroke="#8c3a00" fill="none"/>
        <circle cx="682.500" cy="410.500" r="36.500" fill="none" stroke="#eee"/>
        <path d="M682.500 151v463" stroke="#ddd"/><path d="M213 411h1045" stroke="#707070" stroke-width="2"/>
        <use href="#mk" x="620" y="160"/><use href="#mk" x="761" y="184"/><use href="#mk" x="489" y="233"/><use href="#mk" x="1092" y="324"/><use href="#mk" x="945" y="383"/><use href="#mk" x="763" y="395"/><use href="#mk" x="538" y="464"/><use href="#mk" x="465" y="475"/><use href="#mk" x="1202" y="563"/><use href="#mk" x="1253" y="356"/>
        <path d="M682 409h5v2h-5z" fill="#d8a83a"/><path d="M684 410h8v2h-8z" fill="#1515e0"/>
        <path d="M225 568v33h33M222.500 598.500h6v6h-6z" fill="none" stroke="#bbb"/>
        <path d="M226 557l4 4 4-4M230 561v5M261 593l9 8M270 593l-9 8" fill="none" stroke="#bbb"/>
        <circle cx="1204" cy="203.500" r="35.500" fill="none" stroke="#343434" stroke-width="7"/>
        <path d="M1187 187h34v33h-34z" fill="#cdcdd0"/><path d="M1193 193h22v21h-22z" fill="#c2c6cf"/>
        <g class="compass"><text x="1204" y="172">N</text><text x="1204" y="244">S</text><text x="1167" y="208">O</text><text x="1240" y="208">E</text></g>
        <text class="face" x="1204" y="206">SUPERIOR</text>
        <rect x="1189" y="260" width="30" height="11" rx="2" fill="#a3a3ad" stroke="#74747d"/><text class="scu" x="1198" y="268">SCU</text><path d="M1209 264h5l-2 3z" fill="#c5c5cc"/>
      </svg>
      <div class="modify"><svg><use href="#erase"/></svg><svg><use href="#copy"/></svg><svg><use href="#mirror"/></svg><svg><use href="#offset"/></svg><svg><use href="#array"/></svg><svg><use href="#move"/></svg><svg><use href="#rotate"/></svg><svg><use href="#scale"/></svg><svg><use href="#stretch"/></svg><svg><use href="#trim"/></svg><svg><use href="#extend"/></svg><svg><use href="#breakp"/></svg><svg><use href="#break"/></svg><svg><use href="#join"/></svg><svg><use href="#chamfer"/></svg><svg><use href="#fillet"/></svg><svg><use href="#explode"/></svg></div>
    </div>
    <div class="layouts"><svg viewBox="0 0 42 12"><path d="M.500.500v11M10.500.500v11M20.500.500v11M30.500.500v11M41.500.500v11" stroke="#fff"/><path d="M8 3L4 6l4 3zM18 3l-3 3 3 3zM23 3l3 3-3 3zM33 3l3 3-3 3z" fill="#777"/><path d="M3 3v6M38 3v6" stroke="#777"/></svg><button class="on">Modelo</button><button>impresion</button><svg class="slash" viewBox="0 0 6 12"><path d="M1 12L5 0" stroke="#333"/></svg></div>
    <div class="cmd"><div class="log">Comando: *Cancelar*<br>Comando:<br>Comando:</div><input type="text" aria-label="Línea de comando" value="Desplazar etiqueta:Especificar la ubicación"></div>
  </div>
</main>

<footer class="status">
  <span class="coords">925368.686, 1204897.444, 359.928</span>
  <div class="toggles"><svg><use href="#datum"/></svg><svg><use href="#snap"/></svg><svg><use href="#grid"/></svg><svg><use href="#ortho"/></svg><svg><use href="#polar"/></svg><svg class="lit"><use href="#osnap"/></svg><svg class="lt"><use href="#cube"/></svg><svg><use href="#angle"/></svg><svg><use href="#ducs"/></svg><svg><use href="#lead-add"/></svg><svg class="lit"><use href="#dyn"/></svg><svg class="lit"><use href="#hatch"/></svg><svg><use href="#qp"/></svg><svg><use href="#cycle"/></svg></div>
  <div class="right"><button>MODELO</button><svg><use href="#screen"/></svg><svg><use href="#panes"/></svg><svg class="far"><use href="#man"/></svg><button>1:200 <i class="tri"></i></button><svg class="wide"><use href="#man-sun"/></svg><svg><use href="#man"/></svg><svg class="wide"><use href="#gear"/></svg><svg><use href="#layer-unlock"/></svg><svg><use href="#layer-prop"/></svg><svg class="wide lt"><use href="#shield"/></svg><svg class="lt"><use href="#bulb"/></svg><i class="tri"></i><svg class="wide"><use href="#file"/></svg></div>
</footer>

<footer class="taskbar">
  <button class="start"><svg viewBox="0 0 16 16"><path d="M1 3q4-2 6 0v5Q4 6 1 8z" fill="#e55b2b"/><path d="M8 3q3 2 7 0v5q-4 2-7 0z" fill="#6cad35"/><path d="M1 9q3-2 6 0v5q-3-2-6 0z" fill="#3e8dd3"/><path d="M8 9q3 2 7 0v5q-4 2-7 0z" fill="#f3c12e"/></svg>Inicio</button>
  <div class="apps">
    <button aria-label="Internet Explorer"><svg viewBox="0 0 24 24"><path d="M20 17a9 9 0 1 1 1-6H8a4 4 0 0 0 8 4z" fill="#35a7e8" stroke="#1c82c6"/><path d="M8 10a4 4 0 0 1 7 0z" fill="#e9f4fa"/><path d="M1 21C1 12 14 0 22 3c2 1 1 4 0 5 0-7-14 1-18 10" fill="none" stroke="#e8b632" stroke-width="2"/></svg></button>
    <button aria-label="Explorador"><svg viewBox="0 0 24 24"><path d="M2 5l8-3 2 3h10v14H2z" fill="#efd77b" stroke="#b99838"/><path d="M3 8h19v11H3z" fill="#f7e8a7"/><path d="M5 23v-7q0-2 2-2h11q2 0 2 2v7h-4v-5h-7v5z" fill="#81b8dc" stroke="#4583ad"/></svg></button>
    <button aria-label="Reproductor"><svg viewBox="0 0 24 24"><path d="M7 2h15v18H7z" fill="#72b2df" stroke="#4384b5"/><path d="M3 4h15v18H3z" fill="#8bc5e9" stroke="#4384b5"/><circle cx="11" cy="12" r="7" fill="#ef7623" stroke="#f6d7b4"/><path d="M9 7l7 5-7 5z" fill="#fff"/></svg></button>
    <button aria-label="Firefox"><svg viewBox="0 0 24 24"><circle cx="12" cy="12" r="11" fill="#e86b1c"/><circle cx="13" cy="10" r="8" fill="#295f9f"/><path d="M8 3c4-2 9 1 8 4l-5 1z" fill="#5cb0de"/><path d="M2 6l5 2 5 1-4 3c1 5 8 7 12 0 1 12-19 13-18-6z" fill="#f38b22"/><path d="M21 7c4 12-8 18-16 13 9 2 15-4 16-13z" fill="#ffce42"/></svg></button>
    <button aria-label="Chrome"><svg viewBox="0 0 24 24"><circle cx="12" cy="12" r="11" fill="#4fae4f"/><path d="M2 7C8-3 20 0 22 8H12l-5 6z" fill="#dc3f35"/><path d="M22 8c3 9-4 16-11 15l5-9V8z" fill="#f8cf39"/><circle cx="12" cy="12" r="5.500" fill="#fff"/><circle cx="12" cy="12" r="4" fill="#3b87d3"/></svg></button>
    <button aria-label="Notas"><svg viewBox="0 0 24 24"><path d="M7 3l15 2-4 17-16-4z" fill="#77b8cc" stroke="#4e8c9e"/><path d="M7 3l15 2-2 5L5 8z" fill="#a9dbe4"/><path d="M2 18l16 4 1-3L3 15z" fill="#e5eef0"/></svg></button>
    <button aria-label="Documento"><svg viewBox="0 0 24 24"><path d="M4 1h16v22H4z" fill="#ddebf8" stroke="#5b95ca" stroke-width="1.500"/><path d="M6 3h12v3H6z" fill="#63a0d6"/><path d="M7 9h5v5H7z" fill="#68a2d1"/><path d="M14 10h4M14 13h4M7 17h11M7 20h11" stroke="#7ba7ca"/></svg></button>
    <button class="act" aria-label="AutoCAD Civil 3D"><svg viewBox="0 0 24 24"><path d="M1 1h22v22H1z" fill="#a5a5a5"/><path d="M1 18l10-6 12 5v6H1z" fill="#343434"/><path d="M2 3c4-2 7 3 10 2 5-3 9-3 8 0 0 3-8 4-5 9 1 2 4 2 6 4-7 3-14-1-12-8L3 8z" fill="#d91e2b"/><path d="M14 20h7" stroke="#ddd" stroke-width="2"/></svg></button>
    <button class="run" aria-label="Camtasia"><svg viewBox="0 0 24 24"><path d="M1 5q10-5 19 0l3 15q-9-4-18 1z" fill="#a7c254" stroke="#74902b"/><path d="M2 7q8-3 18 8M5 18q5-8 16-11" fill="none" stroke="#dce9ad" stroke-width="2"/></svg></button>
    <button class="run" aria-label="Grabadora"><svg viewBox="0 0 24 24"><path d="M11 8h12v11H11z" fill="#7d9935" stroke="#333"/><path d="M14 10h7v6h-7z" fill="#b6cf56"/><circle cx="7" cy="5" r="4" fill="#222"/><path d="M4 8h8v11l-2 5H6l1-8z" fill="#333"/><path d="M2 3h4v4H2z" fill="#777"/></svg></button>
  </div>
  <span class="lang">ES</span>
  <div class="tray"><svg viewBox="0 0 56 16"><path d="M2 6l2-2 2 2M2 9l2-2 2 2" fill="none" stroke="#222" stroke-width="1.500"/><path d="M14 15V3h8v7h-7" fill="#fff" stroke="#777" stroke-width="1.300"/><path d="M20 8l4 7h-8z" fill="#f8d92c" stroke="#977c12"/><path d="M29 13h11V4z" fill="#ccc" stroke="#777"/><path d="M45 6h3l4-3v11l-4-3h-3z" fill="#fff" stroke="#777"/><path d="M53 5q3 4 0 7" fill="none" stroke="#777"/></svg><time>12:55 a.m.<br>01/12/2011</time><svg class="desk" viewBox="0 0 12 12"><path d="M1 2h11v6H1z" fill="#2d71bd" stroke="#1d477b"/><path d="M4 10h6" stroke="#555"/></svg></div>
</footer>

<div class="mark"><svg viewBox="0 0 137 82">
  <g fill="none" stroke="#d8d8d8" stroke-opacity=".6"><path d="M6 26l16-3 22 5-22 5zM6 26v12l16 6V33M20 44v20l-6 2v9l14 5M36 27q6-8 16-6l19 4M60 18l30 6M92 17q4-6 14-4l13 2M76 52l16 8 5-3M48 60l14 6M119 15q14 2 13 16-2 14-22 17"/></g>
  <g fill="#fff" fill-opacity=".12"><path d="M6 26l16-3 22 5-22 5v11L6 38zM36 27q6-8 16-6l22 5-4 28-20-8zM60 18l36 6v34l-20-8zM92 17q6-6 14-4l16 2-12 33-14-8z"/></g>
  <g class="logo"><text x="20" y="72" class="t">T</text><text x="48" y="62" class="o">O</text><text x="76" y="55" class="p">P</text><text x="96" y="55" class="three">3</text><text x="109" y="44" class="d">D</text></g>
</svg></div>
</body>
</html>
```
FILE: styles.css
```css
* { box-sizing: border-box; }
body {
  margin: 0; height: 100vh; min-height: 600px; overflow: hidden; position: relative;
  display: flex; flex-direction: column; background: #606060; color: #333;
  font: 7px/9px "DejaVu Sans Condensed", "DejaVu Sans", sans-serif;
}
.sprite { position: absolute; width: 0; height: 0; }
svg { width: 12px; height: 12px; flex: none; display: block; }
button, select, input { font: inherit; color: inherit; margin: 0; padding: 0; border: 0; background: none; border-radius: 0; outline: 0; }
button { white-space: nowrap; }
select { appearance: none; min-width: 0; flex: 1; opacity: 1; }
a { color: inherit; text-decoration: none; white-space: nowrap; }
h1, h2 { margin: 0; font: inherit; }
.tri { display: inline-block; flex: none; border: 2px solid transparent; border-top: 3px solid currentColor; border-bottom: 0; vertical-align: middle; }
.tri.side { border: 2px solid transparent; border-left: 3px solid #111; border-right: 0; }

.top { position: relative; flex: none; background: linear-gradient(#a4a4a4, #828282 55%, #5c5c5c); color: #f2f2f2; }
.app { position: absolute; left: 0; top: 0; width: 27px; height: 28px; }
.app svg { width: 27px; height: 28px; }
.app span { position: absolute; right: 2px; bottom: 0; color: #222; }
.drag { position: absolute; left: 12px; top: 0; width: 15px; height: 12px; overflow: hidden; padding: 2px 0 0 1px; background: #14296c; color: #fff; }
.title { height: 16px; display: grid; grid-template-columns: 1fr auto 1fr; align-items: center; }
.quick { display: flex; align-items: center; gap: 4px; padding-left: 33px; height: 15px; }
.quick .tri { color: #333; }
.quick svg { width: 11px; height: 10px; }
.quick button:first-child { margin-right: 1px; }
.space { display: flex; align-items: center; width: 119px; height: 13px; padding: 0 2px; margin-left: 2px; background: #e8e8e8; color: #222; }
.space svg { margin-right: 1px; }
.blue { width: 10px; height: 12px; background: #294a8b; align-self: flex-start; }
.blue.pale { background: #82a8da; }
h1 { display: flex; gap: 8px; font-weight: bold; white-space: nowrap; }
.info { display: flex; align-items: center; justify-content: flex-end; gap: 4px; }
.info .small { width: 8px; margin-left: -1px; }
.info input { width: 119px; height: 13px; padding: 0 2px; background: #fff; font-style: italic; }
.info input::placeholder { color: #666; opacity: 1; }
.info .q { margin-left: 6px; margin-right: 3px; }
.win { width: 30px; height: 10px; margin-right: 2px; }
.menus { display: flex; height: 14px; align-items: center; padding-left: 35px; gap: 13px; }
.menus .win { margin-left: auto; }
.tabs { flex: none; display: flex; height: 14px; align-items: center; gap: 14px; padding: 0 8px; background: #3f3f3f; color: #e4e4e4; border-bottom: 1px solid #477c35; }
.tabs .on { background: #b5b9dd; color: #333; padding: 2px 5px; margin: 0 -9px 0 -8px; }
.tabs .more { width: 30px; height: 10px; }

.ribbon { flex: none; display: flex; height: 67px; background: linear-gradient(#d2e4cb, #aeb7ab 50%, #868686); border-bottom: 1px solid #63a04d; border-left: 1px solid #63a04d; }
.panel { display: flex; flex-direction: column; background: #fff; border-right: 1px solid #ccc; }
.panel .body { flex: 1; display: flex; justify-content: center; padding-top: 5px; }
.panel h2 { height: 12px; line-height: 11px; text-align: center; background: linear-gradient(#e3f6da, #cdebc0); white-space: nowrap; margin-bottom: 1px; }
.panel h2 .tri { margin-left: 3px; }
.p1 { width: 71px; } .p2 { width: 113px; } .p3 { width: 316px; } .p4 { width: 45px; } .p5 { width: 112px; } .p6 { width: 122px; }
.big { display: flex; flex-direction: column; align-items: center; text-align: center; line-height: 9px; align-self: flex-start; }
.big svg { width: 21px; height: 21px; margin-bottom: 2px; }
.p1 .body { gap: 5px; }
.p2 .body { gap: 8px; }
.p3 .body { gap: 5px; justify-content: flex-start; padding-left: 2px; }
.p6 .body { gap: 5px; }
.list { display: flex; flex-direction: column; gap: 4px; }
.list button { display: flex; align-items: center; gap: 3px; height: 12px; }
.list svg { width: 11px; height: 11px; }
.list.cut { border-left: 1px solid #ddd; padding-left: 7px; margin-left: 2px; }

.bars { flex: none; padding-top: 1px; height: 39px; display: flex; flex-direction: column; gap: 2px; }
.bar { display: flex; height: 16px; align-items: center; gap: 1px; }
.grp { display: flex; align-items: center; height: 15px; padding-right: 1px; background: #ebebeb; position: relative; margin-left: 6px; }
.grp::before { content: ""; position: absolute; left: -5px; top: 2px; width: 3px; height: 11px; background: repeating-linear-gradient(#333 0 1px, #666 1px 3px); }
.grp > svg { width: 15px; padding: 0 1px; }
.grp hr { width: 1px; height: 12px; margin: 0 2px; border: 0; background: #999; }
.combo { position: relative; display: flex; align-items: center; gap: 1px; height: 13px; background: #d0cdc5; border: 1px solid #aaa; border-top-color: #777; padding: 0 12px 0 2px; color: #777; }
.combo::after { content: ""; position: absolute; right: 0; top: 0; width: 10px; height: 11px; border: 1px solid #999; background: linear-gradient(#666, #666) 2px 3px / 5px 1px no-repeat, linear-gradient(#666, #666) 3px 4px / 3px 1px no-repeat, linear-gradient(#666, #666) 4px 5px / 1px 1px no-repeat, #dedbd4; pointer-events: none; }
.combo svg { width: 10px; height: 10px; }
.combo .sq { width: 8px; height: 8px; border: 1px solid #222; background: #fff; margin: 0 3px; flex: none; }
.combo .ln { height: 1px; background: #666; flex: none; margin-right: 4px; }
.layer { width: 197px; margin-left: 1px; }
.gapl { margin-left: 2px; }
.props { gap: 6px; padding-left: 1px; }
.c1 { width: 99px; } .c2 { width: 105px; } .c3 { width: 81px; } .c4 { width: 79px; padding-left: 6px; } .c5 { width: 79px; } .c6 { width: 93px; }
.c2 .ln { width: 40px; } .c3 .ln { width: 24px; }

main { flex: 1; min-height: 0; display: flex; }
.palette { width: 197px; flex: none; display: flex; flex-direction: column; background: #f0f0f0; border: 1px solid #888; margin-bottom: 4px; }
.palette h2 { height: 13px; line-height: 13px; background: #969696; color: #111; font-weight: bold; border-left: 3px double #555; padding-left: 4px; }
.tools { display: flex; align-items: center; height: 19px; gap: 4px; padding-right: 3px; }
.tools span { flex: 1; }
.tools button { width: 14px; height: 14px; display: grid; place-items: center; }
.tools .on { width: 16px; border: 1px solid #999; background: #fff; }
.tools .dim { opacity: .5; }
.tools .hq { width: 11px; height: 11px; border: 1px solid #333; font-weight: bold; margin-left: 3px; }
.view { background: #fff; color: #222; border-color: #777; margin-bottom: 3px; height: 13px; flex: none; }
.tree { flex: none; height: 363px; margin: 0; padding: 0 0 55px; list-style: none; background: #fff; border-top: 1px solid #777; display: grid; grid-template-rows: repeat(23, 1fr); color: #222; position: relative; }
.tree::before { content: ""; position: absolute; left: 8px; top: 12px; height: 230px; border-left: 1px dotted #999; }
.tree::after { content: ""; position: absolute; left: 21px; top: 20px; height: 214px; border-left: 1px dotted #999; }
.tree li { display: flex; align-items: center; gap: 3px; white-space: nowrap; min-height: 0; }
.tree button { width: 7px; height: 7px; margin: 0 2px 0 1px; border: 1px solid #888; background: #fff; line-height: 5px; text-align: center; z-index: 1; flex: none; }
.tree .leaf::before { content: ""; width: 6px; margin-left: 4px; border-top: 1px dotted #999; flex: none; }
.tree b { color: #000; }
.l0 { padding-left: 4px; } .l1 { padding-left: 17px; } .l2 { padding-left: 29px; } .l3 { padding-left: 42px; }
.sel { flex: 1; height: 12px; line-height: 13px; background: #7f7f7f; padding-left: 1px; margin-left: -1px; }
.preview { flex: 1; border-top: 6px solid #6a6a6a; border-bottom: 2px solid #ccc; }
.vtabs { width: 11px; flex: none; padding-top: 15px; }
.vtabs button { writing-mode: vertical-rl; transform: rotate(180deg); width: 11px; background: #bdbdbd; border: 1px solid #777; border-right: 0; text-align: center; color: #222; display: block; }
.vtabs .on { background: #f0f0f0; }
.t1, .t2, .t3 { height: 73px; }
.work { flex: 1; min-width: 0; margin-left: 5px; display: flex; flex-direction: column; }
.stage { flex: 1; min-height: 0; display: flex; align-items: flex-start; gap: 5px; }
.drawing { flex: 1; min-width: 0; width: auto; height: 100%; background: #000; border-top: 1px solid #999; border-right: 1px solid #ccc; }
.compass { font: bold 12px "DejaVu Sans Condensed", sans-serif; fill: #c4c4c4; text-anchor: middle; }
.face { font: bold 6px "DejaVu Sans Condensed", sans-serif; fill: #444; text-anchor: middle; }
.scu { font: 6px "DejaVu Sans", sans-serif; fill: #666; text-anchor: middle; }
.modify { width: 16px; flex: none; height: 255px; background: #ececec; border-top: 6px solid #444; display: flex; flex-direction: column; align-items: center; justify-content: space-between; padding: 1px 0; }
.layouts { flex: none; height: 14px; margin-right: 22px; display: flex; background: #d4d0c8; border-bottom: 2px solid #eee; font: 7px/12px "Liberation Sans", sans-serif; color: #222; }
.layouts svg { width: 42px; height: 12px; }
.layouts .slash { width: 6px; }
.layouts .on { background: #000; color: #fff; font-weight: bold; padding: 0 9px 0 7px; clip-path: polygon(0 0, 100% 0, 90% 100%, 10% 100%); }
.cmd { flex: none; height: 48px; display: flex; flex-direction: column; background: #c6c6c6; border-left: 9px solid #a3a3a3; font: 8px/10px "DejaVu Sans Mono", monospace; color: #222; }
.log { flex: 1; padding: 1px; }
.cmd input { height: 12px; background: #fff; border-top: 1px solid #888; padding: 0 1px; }

.status { flex: none; height: 14px; display: flex; align-items: center; background: linear-gradient(#979797, #737373); border-top: 1px solid #444; color: #111; }
.coords { width: 147px; padding-left: 8px; font: 7px/12px "Liberation Sans", sans-serif; }
.toggles { display: flex; background: #a3a3a3; }
.toggles svg { width: 15px; height: 13px; padding: 1px; border-right: 1px solid #777; }
.toggles svg:nth-child(3n) { width: 14px; }
.lit { background: #a6d8e6; }
.lt { background: #ccc; }
.right { margin-left: auto; display: flex; align-items: center; background: #a3a3a3; }
.right svg { width: 15px; height: 12px; padding: 0 1px; border-left: 1px solid #888; }
.right button { padding: 0 2px; }
.right .far { margin-left: 13px; }
.right .wide { margin-left: 2px; }

.taskbar { flex: none; height: 29px; display: flex; align-items: center; background: #d4d0c8; border-top: 1px solid #eee; color: #222; }
.start { display: flex; align-items: center; gap: 1px; width: 35px; height: 25px; margin-left: 2px; padding-left: 1px; border: 1px solid; border-color: #fff #666 #666 #fff; font-weight: bold; color: #111; }
.start svg { width: 11px; height: 12px; }
.apps { display: flex; margin-left: 6px; padding-left: 7px; border-left: 1px solid #999; }
.apps button { width: 31px; height: 26px; margin-right: 2px; display: grid; place-items: center; }
.apps button:nth-child(3n) { margin-right: 3px; }
.apps svg { width: 21px; height: 21px; }
.apps .act { background: #fff; border: 1px solid; border-color: #555 #fff #fff #555; }
.apps .run { border: 1px solid; border-color: #fff #666 #666 #fff; }
.lang { margin-left: auto; padding: 6px 7px; border-left: 1px solid #999; }
.tray { display: flex; align-items: center; gap: 9px; height: 26px; padding: 0 1px 0 2px; border: 1px solid #888; border-right: 0; border-bottom-color: #fff; }
.tray svg { width: 56px; height: 16px; }
.tray time { text-align: center; line-height: 11px; }
.tray .desk { width: 12px; height: 12px; margin-left: -4px; }

.mark { position: absolute; right: 57px; bottom: 29px; width: 137px; height: 82px; background: rgba(120, 120, 120, .5); pointer-events: none; }
.mark svg { width: 137px; height: 82px; }
.logo { font-family: "Liberation Serif", serif; stroke-width: 1px; }
.t { font-size: 46px; } .o { font-size: 36px; } .p { font-size: 34px; }
.t, .o, .p { fill: #dfdf78; stroke: #dfdf78; }
.three { font-size: 24px; fill: #8f8fd8; stroke: #8f8fd8; }
.d { font-size: 34px; fill: #d06a6a; stroke: #d06a6a; }
```
